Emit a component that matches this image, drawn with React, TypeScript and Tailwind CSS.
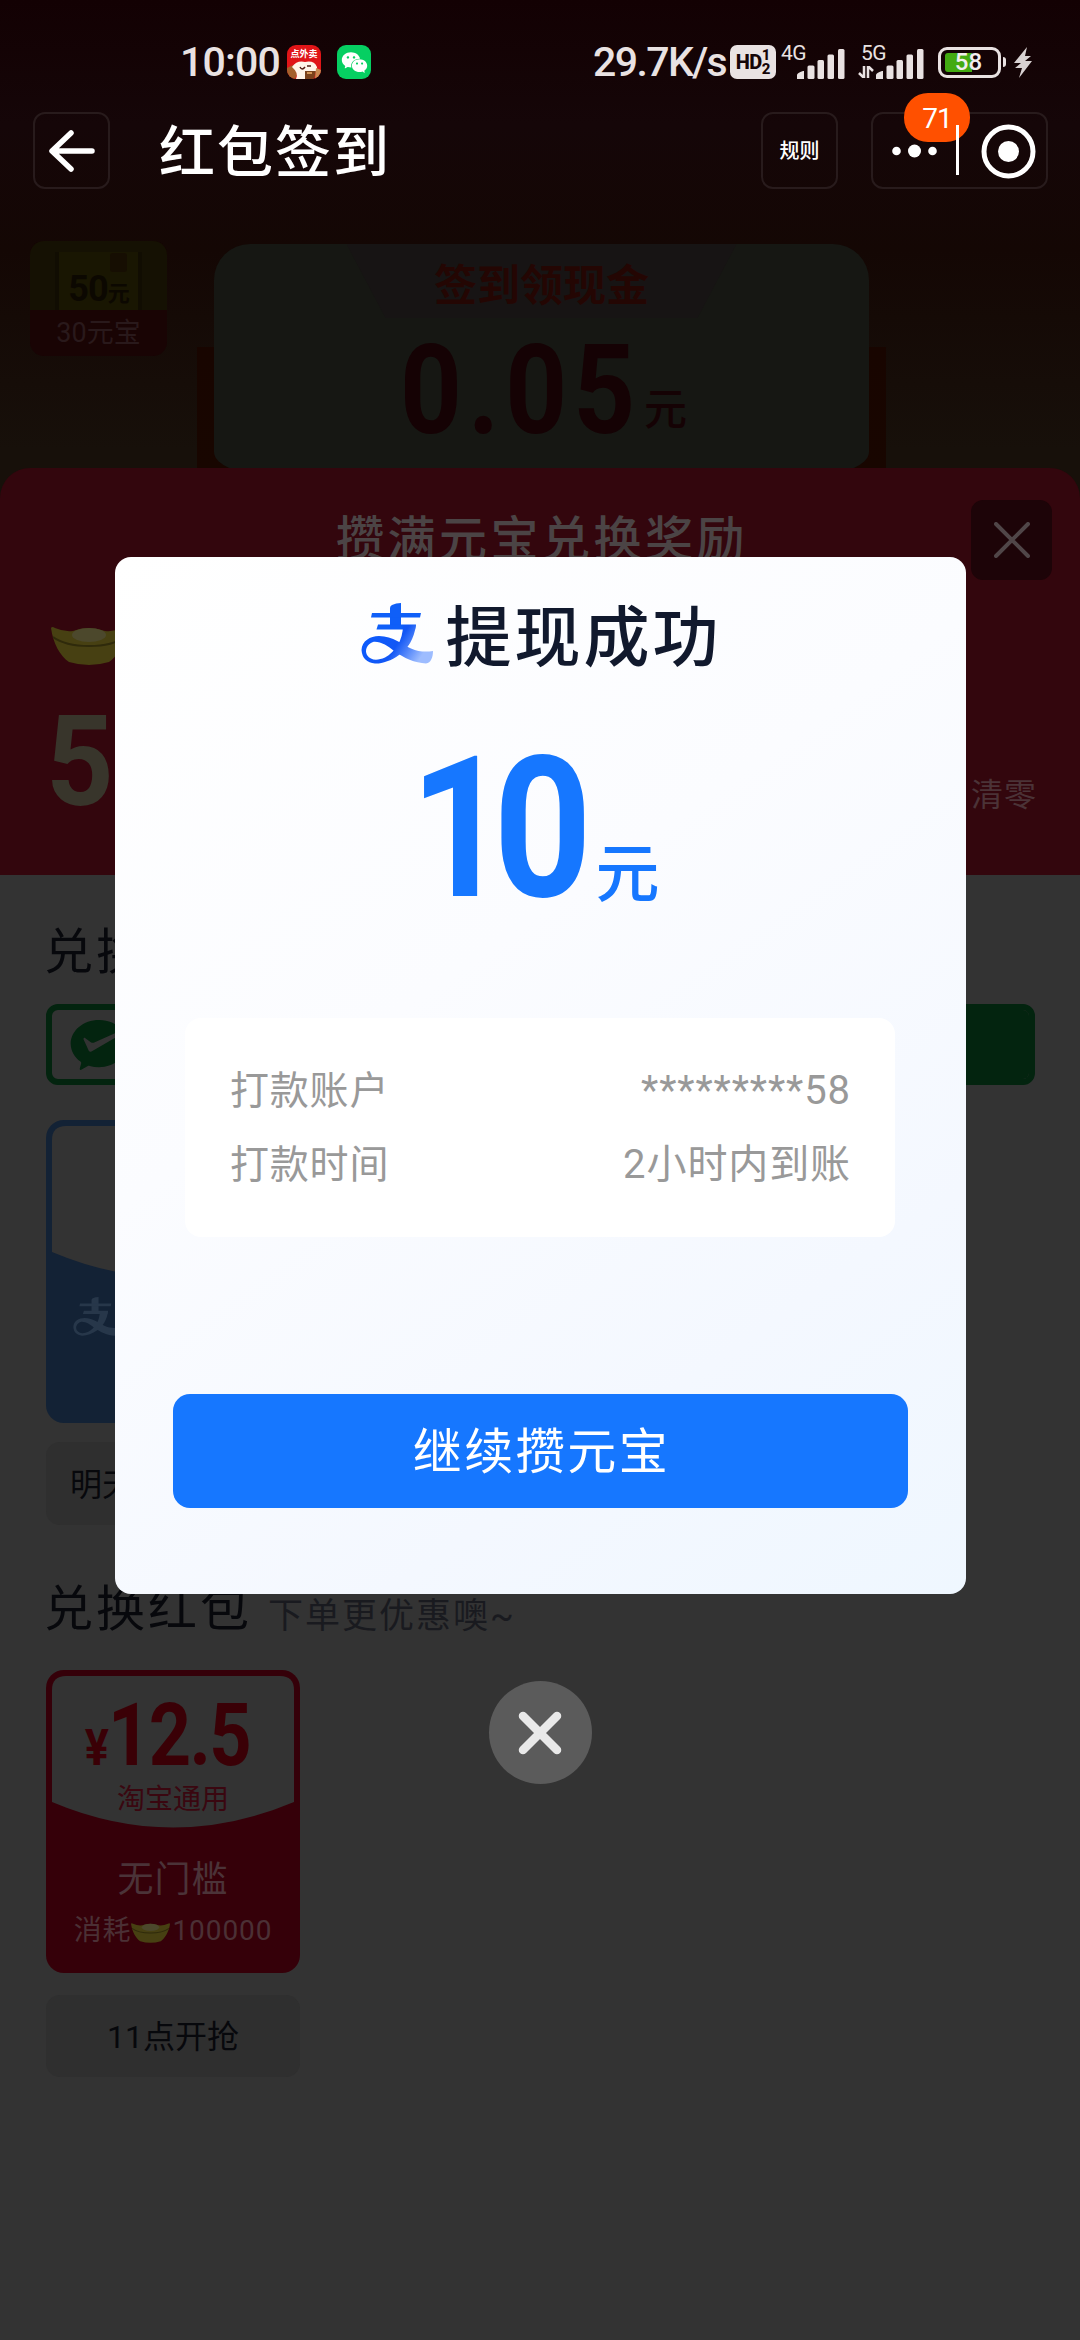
import { AiFillWechat } from "react-icons/ai";
import { RiWechatPayFill } from "react-icons/ri";

const AlipayMark = ({ className, flat }: { className: string; flat?: boolean }) => (
  <svg viewBox="0 0 72 61" className={className}>
    <defs>
      <linearGradient id="alipay" x1="0" y1="0" x2="1" y2="0.35">
        <stop offset="0" stopColor="#0a5cff" />
        <stop offset="0.6" stopColor="#1257f5" />
        <stop offset="1" stopColor="#9dbcff" />
      </linearGradient>
    </defs>
    <g fill={flat ? "#27374a" : "#0f5ff8"}>
      <path d="M31 2 Q35 0 40 0 V24 H29 V5 Q29 3 31 2Z" />
      <path d="M11 10 H60 L59 14.500 H10Z" />
      <path d="M17 21.500 H55 L54 26.500 H15.500Z" />
      <path
        fill={flat ? "#27374a" : "url(#alipay)"}
        d="M42 22 H55 C53 36 47 46 38 52 C30 58 20 61 14 60.500 C6 60 1 55 0.500 47 C1 38 9 33 18 33 C32 33 42 42 50 45.500 C58 49 65 49 72 48 C72 54 70 60 65 60.500 C54 60 43 55 33 48 C27 43 19 38 12 39 C6 41 3.500 47 6 52 C10 58 17 57.500 24 54.500 C34 49 42 38 42 22Z"
      />
    </g>
  </svg>
);

const Ingot = ({ className }: { className: string }) => (
  <svg viewBox="0 0 76 38" className={className}>
    <path d="M0 1 Q1 -1 4 1 Q13 5 22 4 Q37 -2 54 4 Q63 5 72 1 Q76 -1 76 2 C74 16 66 30 58 35 Q38 41 18 35 C9 29 2 16 0 1Z" fill="#474012" />
    <path d="M2 10 Q14 19 38 19 Q62 19 74 10" fill="none" stroke="#2f2a0b" strokeWidth="2" />
    <ellipse cx="38" cy="8" rx="17" ry="7" fill="#4c482c" />
  </svg>
);

const Signal = () => (
  <svg viewBox="0 0 48 30" className="h-[30px] w-[48px]" fill="#e9e2e2">
    <path d="M0 30 V26 Q0 24 6 22 H7 V30Z" />
    <rect x="10.500" y="16.500" width="7" height="13.500" rx="1.500" />
    <rect x="20.500" y="11" width="6.500" height="19" rx="1.500" />
    <rect x="30.500" y="5.500" width="6.500" height="24.500" rx="1.500" />
    <rect x="41" y="0" width="6.500" height="30" rx="1.500" />
  </svg>
);

const StatusBar = () => (
  <div className="flex h-[112px] items-start pt-[45px] pl-[180px] text-[#e9e2e2]">
    <div className="w-[107px] text-[41px] leading-[35px] font-medium tracking-[-0.8px]">10:00</div>
    <div className="flex h-[34px] w-[34px] flex-col items-center overflow-hidden rounded-[9px] bg-[#e01518]">
      <div className="h-[15px] pt-[3px] text-[9px] leading-[12px] font-bold whitespace-nowrap text-white">点外卖</div>
      <svg viewBox="0 0 34 19" className="h-[19px] w-[34px]">
        <path d="M0 8 L6 5 L10 14 L8 19 H0Z" fill="#a4602c" />
        <path d="M5 7 Q10 0 18 2 Q27 0 30 7 Q31 12 26 13 L18 19 H9 Q12 13 5 7Z" fill="#fff4e8" />
        <path d="M13 7 Q15 11 18 7 M20 6 h4" stroke="#521c13" strokeWidth="1.500" fill="none" />
        <path d="M18 11 H29 L27 19 H18Z" fill="#7a421b" />
        <path d="M20 13 h5" stroke="#f2b56c" strokeWidth="1.500" />
        <path d="M29 8 L34 10 V19 H28Z" fill="#c98a51" />
      </svg>
    </div>
    <div className="ml-[16px] flex h-[34px] w-[34px] items-center justify-center rounded-[9px] bg-[#06cf62]">
      <AiFillWechat className="h-[29px] w-[29px] text-white" />
    </div>
    <div className="ml-[222px] w-[137px] text-[41px] leading-[35px] font-medium tracking-[-1.600px] whitespace-nowrap">29.7K/s</div>
    <div className="flex h-[34px] w-[46px] items-center justify-center rounded-[7px] bg-[#e9e2e2] text-[#150507]">
      <span className="text-[20px] font-extrabold tracking-[-0.5px]">HD</span>
      <span className="flex flex-col text-[15px] leading-[14px] font-extrabold">
        <span>1</span>
        <span>2</span>
      </span>
    </div>
    <div className="ml-[5px] flex h-[34px] w-[64px] items-end">
      <span className="w-[16px] self-start text-[21px] leading-[16px] tracking-[-0.5px]">4G</span>
      <Signal />
    </div>
    <div className="ml-[13px] flex h-[34px] w-[67px] items-end">
      <div className="flex h-[34px] w-[18px] flex-col justify-between">
        <span className="pl-[3px] text-[21px] leading-[16px] tracking-[-0.5px]">5G</span>
        <svg viewBox="0 0 16 12" className="mb-[1px] h-[12px] w-[16px]" fill="none" stroke="#e9e2e2" strokeWidth="2.500">
          <path d="M6 0 V12 L1 7 M10 12 V0 L15 5" />
        </svg>
      </div>
      <Signal />
    </div>
    <div className="mt-[2px] ml-[13px] flex h-[31px] w-[63px] items-center rounded-[9px] border-[3px] border-[#e9e2e2] pl-[4px]">
      <div className="flex h-[19px] w-[48px] items-center justify-center rounded-[3px] bg-[linear-gradient(90deg,#43aa12_0_27px,transparent_27px)] pr-[1px] text-[24px] leading-[19px] font-medium text-[#f1eeee]">58</div>
    </div>
    <div className="mt-[12px] ml-[2px] h-[10px] w-[3px] rounded-r bg-[#e9e2e2]" />
    <svg viewBox="0 0 18 31" className="mt-[2px] ml-[8px] h-[31px] w-[18px]" fill="#d8d2d2">
      <path d="M13 0 L0 16 L7 16 L1 21 L8 21 L5 31 L18 14 L11 14 L17 9 L11 9Z" />
    </svg>
  </div>
);

const Header = () => (
  <div className="flex h-[129px] items-start pl-[33px] text-white">
    <div className="flex h-[77px] w-[77px] items-center justify-center rounded-[12px] border-2 border-[#281b1c]">
      <svg viewBox="0 0 46 42" className="h-[42px] w-[46px]" fill="none" stroke="#fff" strokeWidth="5.500" strokeLinecap="round" strokeLinejoin="round">
        <path d="M22 3 L3 21 L22 39 M4 21 H43" />
      </svg>
    </div>
    <div className="ml-[49px] w-[602px] text-[56px] leading-[82px] font-medium tracking-[2px]">红包签到</div>
    <div className="flex h-[77px] w-[77px] items-center justify-center rounded-[12px] border-2 border-[#281b1c] text-[20px] font-medium">规则</div>
    <div className="relative ml-[33px] h-[77px] w-[177px] rounded-[12px] border-2 border-[#281b1c]">
      <div className="absolute top-[-21px] left-[31px] h-[49px] w-[66px] rounded-[24px] bg-[#ff5000] text-center text-[28px] leading-[52px] tracking-[-1px]">71</div>
      <svg viewBox="0 0 173 73" className="relative h-[73px] w-[173px]" fill="#fff">
        <circle cx="23.500" cy="37" r="4.300" />
        <circle cx="41.500" cy="37" r="6.500" />
        <circle cx="59.500" cy="37" r="4.300" />
        <rect x="83" y="11" width="3" height="50" />
        <circle cx="135.500" cy="37.500" r="24.500" fill="none" stroke="#fff" strokeWidth="5" />
        <circle cx="135.500" cy="37.500" r="10.500" />
      </svg>
    </div>
  </div>
);

const SignInScene = () => (
  <div className="flex h-[227px] items-start overflow-hidden">
    <div className="ml-[30px] h-[115px] w-[137px] overflow-hidden rounded-[14px] bg-[#190404]">
      <div className="flex h-[69px] justify-center bg-[#151103] pt-[11px]">
        <div className="h-[58px] w-[87px] border-x-4 border-[#110d02] bg-[#191602] text-[#0c0801]">
          <div className="mt-[1px] ml-[51px] h-[19px] w-[17px] rounded-[3px] bg-[#160e02]" />
          <div className="text-center text-[36px] leading-[34px] font-bold tracking-[-1px] whitespace-nowrap">
            50<span className="text-[22px]">元</span>
          </div>
        </div>
      </div>
      <div className="text-center text-[27px] leading-[46px] text-[#29191b]">30元宝</div>
    </div>
    <div className="ml-[30px] flex h-[227px] w-[689px] items-start bg-[linear-gradient(#180500,#180600)] bg-[length:100%_121px] bg-[position:0_106px] bg-no-repeat px-[17px]">
      <div className="mt-[3px] h-[232px] w-[655px] rounded-t-[36px] rounded-b-[60px_24px] bg-[#161713]">
        <div className="mx-auto h-[74px] w-[390px] bg-[#171414] text-center text-[43px] leading-[84px] font-bold text-[#240603] [clip-path:polygon(0_0,100%_0,90%_100%,10%_100%)]">签到领现金</div>
        <div className="flex h-[150px] items-baseline justify-center pt-[8px] pl-[4px] text-[#150204]">
          <span className="w-[236px] origin-left scale-x-87 font-[Roboto] text-[124px] leading-[130px] font-bold tracking-[7px]">0.05</span>
          <span className="ml-[8px] -translate-y-[8px] text-[43px] font-medium">元</span>
        </div>
      </div>
    </div>
  </div>
);

const RewardSheet = () => (
  <div className="h-[407px] rounded-t-[30px] bg-[#33060d] pt-[32px]">
    <div className="flex h-[80px] items-center">
      <div className="flex-1 pl-[113px] text-center text-[48px] font-medium tracking-[3.500px] text-[#4b4445]">攒满元宝兑换奖励</div>
      <div className="mr-[28px] flex h-[80px] w-[81px] items-center justify-center rounded-[12px] bg-[#1d0408]">
        <svg viewBox="0 0 36 36" className="h-[36px] w-[36px]" stroke="#504648" strokeWidth="4" strokeLinecap="round">
          <path d="M2 2 L34 34 M34 2 L2 34" />
        </svg>
      </div>
    </div>
    <Ingot className="mt-[47px] ml-[51px] h-[38px] w-[76px]" />
    <div className="flex items-start justify-between pt-[32px] pr-[43px] pl-[46px]">
      <span className="origin-left scale-x-93 font-[Roboto] text-[127px] leading-[130px] font-bold text-[#38352b]">5</span>
      <span className="pt-[75px] text-[32px] leading-[46px] tracking-[1px] text-[#4b3337]">清零</span>
    </div>
  </div>
);

const CardFace = ({ color }: { color: string }) => (
  <svg viewBox="0 0 254 303" className="col-start-1 row-start-1 h-[303px] w-[254px]">
    <rect width="254" height="303" rx="18" fill={color} />
    <path d="M6 20 Q6 6 20 6 H234 Q248 6 248 20 V132 Q127 183 6 132Z" fill="#333333" />
  </svg>
);

const CashSection = () => (
  <div className="h-[695px] pt-[42px] pl-[46px]">
    <div className="-ml-[2px] h-[87px] text-[49px] leading-[72px] tracking-[3px] text-[#07080c]">兑换现金</div>
    <div className="flex h-[81px] w-[989px] overflow-hidden rounded-[12px] border-[6px] border-[#03240f] bg-[#333]">
      <RiWechatPayFill className="ml-[13px] h-[68px] w-[68px] text-[#03240f]" />
      <div className="ml-auto h-full w-1/2 bg-[#03240f]" />
    </div>
    <div className="mt-[35px] grid h-[303px] w-[254px]">
      <CardFace color="#132235" />
      <div className="col-start-1 row-start-1 pt-[177px] pl-[27px]">
        <AlipayMark flat className="h-[39px] w-[46px]" />
      </div>
    </div>
    <div className="mt-[19px] h-[83px] w-[254px] rounded-[14px] bg-[#2f2f2f] pl-[24px] text-[32px] leading-[87px] text-[#07080c]">明天开抢</div>
  </div>
);

const CouponSection = () => (
  <div className="h-[770px] pl-[46px]">
    <div className="flex h-[100px] items-center">
      <div className="-ml-[2px] pb-[21px] text-[49px] leading-[72px] tracking-[3px] text-[#07080c]">兑换红包</div>
      <div className="ml-[16px] pb-[6px] text-[35px] leading-[50px] tracking-[2px] text-[#191a1f]">下单更优惠噢~</div>
    </div>
    <div className="grid h-[303px] w-[254px]">
      <CardFace color="#350009" />
      <div className="col-start-1 row-start-1 flex flex-col items-center">
        <div className="flex h-[111px] items-baseline pt-[15px] pr-[14px] text-[#3a0006]">
          <span className="origin-right scale-x-90 font-[Roboto] text-[50px] font-bold">¥</span>
          <span className="w-[142px] origin-left scale-x-85 font-[Roboto] text-[87px] leading-[100px] font-bold tracking-[-2px]">12.5</span>
        </div>
        <div className="text-[28px] leading-[38px] text-[#3a0710]">淘宝通用</div>
        <div className="mt-[35px] text-[36px] leading-[52px] tracking-[1px] text-[#4b3338]">无门槛</div>
        <div className="flex items-center text-[28px] leading-[49px] tracking-[0.9px] text-[#4b3035]">
          消耗
          <Ingot className="mt-[5px] mr-[2px] h-[20px] w-[39px]" />
          100000
        </div>
      </div>
    </div>
    <div className="mt-[22px] h-[82px] w-[254px] rounded-[14px] bg-[#2f2f2f] text-center text-[32px] leading-[84px] text-[#07080c]">11点开抢</div>
  </div>
);

const rows = [
  { label: "打款账户", value: "*********58" },
  { label: "打款时间", value: "2小时内到账" },
];

const WithdrawDialog = () => (
  <div className="absolute inset-0 flex flex-col items-center pt-[557px]">
    <div className="flex h-[1037px] w-[851px] flex-col items-center rounded-[16px] bg-[linear-gradient(145deg,#ffffff_0%,#fbfcff_40%,#f4f8ff_75%,#eff7ff_100%)]">
      <div className="flex h-[158px] items-center gap-[13px] pl-[2px] text-[#11192d]">
        <AlipayMark className="mt-[-6px] h-[61px] w-[72px]" />
        <span className="pt-[6px] text-[66px] leading-[158px] font-medium tracking-[3px]">提现成功</span>
      </div>
      <div className="flex h-[303px] items-baseline pt-[4px] pr-[11px] text-[#1677ff]">
        <span className="w-[178px] origin-left scale-x-87 font-[Roboto] text-[197px] leading-[220px] font-bold tracking-[-17px]">10</span>
        <span className="ml-[8px] text-[64px] font-medium">元</span>
      </div>
      <div className="flex h-[219px] w-[710px] flex-col rounded-[16px] bg-white px-[45px] pt-[36px]">
        {rows.map((row) => (
          <div className="flex h-[74px] items-center justify-between text-[39px] text-[#999]" key={row.label}>
            <span className="tracking-[0.8px]">{row.label}</span>
            <span className="-mr-px text-[40px] tracking-[0.9px]">{row.value}</span>
          </div>
        ))}
      </div>
      <button className="mt-[157px] h-[114px] w-[735px] rounded-[17px] bg-[#1677ff] pt-[4px] pl-[3px] text-[49px] tracking-[2.500px] text-white">继续攒元宝</button>
    </div>
    <button className="mt-[87px] flex h-[103px] w-[103px] items-center justify-center rounded-full bg-[#5b5b5b]">
      <svg viewBox="0 0 44 44" className="h-[44px] w-[44px]" stroke="#e9e9e9" strokeWidth="8.500" strokeLinecap="round">
        <path d="M5 5 L39 39 M39 5 L5 39" />
      </svg>
    </button>
  </div>
);

const App = () => {
  return (
    <div className="relative h-[2340px] w-[1080px] overflow-hidden bg-[#333] font-['Roboto','Noto_Sans_CJK_SC',sans-serif]">
      <div className="h-[500px] bg-[linear-gradient(#130103_0%,#150608_25%,#140704_50%,#17100a_90%)]">
        <StatusBar />
        <Header />
        <SignInScene />
        <RewardSheet />
        <CashSection />
        <CouponSection />
      </div>
      <WithdrawDialog />
    </div>
  );
};

export default App;
